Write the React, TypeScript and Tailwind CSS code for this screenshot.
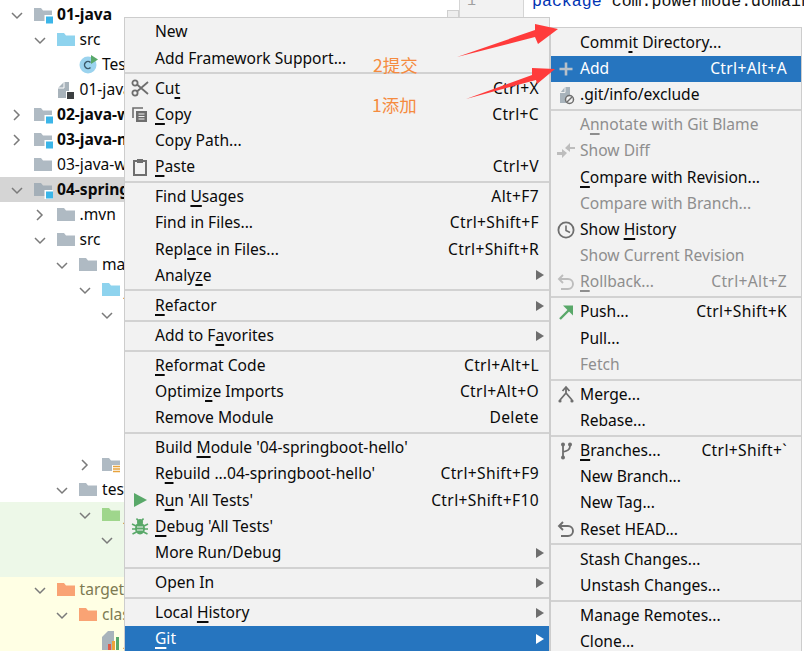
import React from "react";

const font = "font-['Noto_Sans','Liberation_Sans',sans-serif]";

type Item = { l?: React.ReactNode; s?: string; i?: React.ReactNode; d?: boolean; a?: boolean; sub?: boolean; sep?: boolean };

const U = ({ c }: { c: string }) => <span className="underline decoration-[1.5px] underline-offset-[3px]">{c}</span>;

const IconBox = ({ children }: { children: React.ReactNode }) => (
  <svg width="20" height="20" viewBox="0 0 20 20" fill="none">{children}</svg>
);

const Scissors = () => (
  <IconBox>
    <circle cx="5" cy="5" r="2.6" stroke="#6e6e6e" strokeWidth="1.8" />
    <circle cx="5" cy="15" r="2.6" stroke="#6e6e6e" strokeWidth="1.8" />
    <path d="M7 6.5 L18 16 M7 13.5 L18 4" stroke="#6e6e6e" strokeWidth="1.8" />
  </IconBox>
);
const CopyI = () => (
  <IconBox>
    <path d="M3 13V3h10" stroke="#6e6e6e" strokeWidth="1.6" />
    <rect x="6" y="6" width="11" height="11" fill="#6e6e6e" />
    <path d="M8.5 9h6M8.5 11.5h6M8.5 14h6" stroke="#f2f2f2" strokeWidth="1.2" />
  </IconBox>
);
const Paste = () => (
  <IconBox>
    <rect x="4" y="4" width="12" height="14" stroke="#6e6e6e" strokeWidth="2" />
    <rect x="7" y="2" width="6" height="4" fill="#6e6e6e" />
  </IconBox>
);
const RunI = () => (
  <IconBox>
    <path d="M4 3 L17 10 L4 17 Z" fill="#59a869" />
  </IconBox>
);
const Bug = () => (
  <IconBox>
    <ellipse cx="10" cy="11.5" rx="5" ry="6" fill="#59a869" />
    <circle cx="10" cy="5" r="3" fill="#59a869" />
    <path d="M2 7l4 2M18 7l-4 2M2 12h4M18 12h-4M2.5 17l4-2M17.5 17l-4-2M6.5 1.5 8 3.5M13.5 1.5 12 3.5" stroke="#59a869" strokeWidth="1.6" />
    <path d="M7 10h6M7 13h6" stroke="#f2f2f2" strokeWidth="1.2" />
  </IconBox>
);
const Plus = () => (
  <IconBox>
    <path d="M10 3.5v13M3.5 10h13" stroke="#b9c1c9" strokeWidth="2.6" />
  </IconBox>
);
const Exclude = () => (
  <IconBox>
    <path d="M4 8 L9 2 H14 V18 H4 Z" fill="#a8b3bb" />
    <path d="M4 7.5 H9 V2" stroke="#f2f2f2" strokeWidth="1" />
    <circle cx="13.5" cy="14.5" r="4" fill="#f2f2f2" stroke="#6e6e6e" strokeWidth="1.5" />
    <path d="M11 17 L16 12" stroke="#6e6e6e" strokeWidth="1.5" />
  </IconBox>
);
const Diff = () => (
  <IconBox>
    <path d="M1 12h5V9l5 4-5 5v-3H1z" fill="#bdbdbd" transform="translate(0 -1)" />
    <path d="M19 6h-5V2L9 7l5 4V8h5z" fill="#bdbdbd" />
  </IconBox>
);
const Clock = () => (
  <IconBox>
    <circle cx="10" cy="10" r="7.6" stroke="#6e6e6e" strokeWidth="1.8" />
    <path d="M10 5.5V10.5L14 12.5" stroke="#6e6e6e" strokeWidth="1.6" />
  </IconBox>
);
const Undo = ({ c }: { c: string }) => (
  <IconBox>
    <path d="M7 3 L3 7 L7 11 M3 7 H12 A5 5 0 0 1 12 17 H5" stroke={c} strokeWidth="1.9" />
  </IconBox>
);
const Push = () => (
  <IconBox>
    <path d="M4 17 L15 6" stroke="#59a869" strokeWidth="2.4" />
    <path d="M7 3.5 H17 V13.5 Z" fill="#59a869" />
  </IconBox>
);
const Merge = () => (
  <IconBox>
    <path d="M10 2v7M10 8 L4 15 M10 8 L16 15" stroke="#6e6e6e" strokeWidth="1.8" />
    <path d="M6.5 6 L10 2 L13.5 6" stroke="#6e6e6e" strokeWidth="1.8" />
    <circle cx="4" cy="16" r="1.6" fill="#6e6e6e" />
    <circle cx="16" cy="16" r="1.6" fill="#6e6e6e" />
  </IconBox>
);
const Branch = () => (
  <IconBox>
    <path d="M7 4v12M14 5c0 4-3 5-7 6" stroke="#6e6e6e" strokeWidth="1.8" />
    <circle cx="7" cy="3.5" r="2" fill="#6e6e6e" />
    <circle cx="14" cy="3.5" r="2" fill="#6e6e6e" />
    <circle cx="7" cy="16.5" r="2" fill="#6e6e6e" />
  </IconBox>
);

const menu1: Item[] = [
  { l: "New" },
  { l: "Add Framework Support..." },
  { sep: true },
  { l: <>Cu<U c="t" /></>, s: "Ctrl+X", i: <Scissors /> },
  { l: <><U c="C" />opy</>, s: "Ctrl+C", i: <CopyI /> },
  { l: "Copy Path..." },
  { l: <><U c="P" />aste</>, s: "Ctrl+V", i: <Paste /> },
  { sep: true },
  { l: <>Find <U c="U" />sages</>, s: "Alt+F7" },
  { l: "Find in Files...", s: "Ctrl+Shift+F" },
  { l: <>Repl<U c="a" />ce in Files...</>, s: "Ctrl+Shift+R" },
  { l: <>Analy<U c="z" />e</>, sub: true },
  { sep: true },
  { l: <><U c="R" />efactor</>, sub: true },
  { sep: true },
  { l: <>Add to F<U c="a" />vorites</>, sub: true },
  { sep: true },
  { l: <><U c="R" />eformat Code</>, s: "Ctrl+Alt+L" },
  { l: <>Optimi<U c="z" />e Imports</>, s: "Ctrl+Alt+O" },
  { l: "Remove Module", s: "Delete" },
  { sep: true },
  { l: <>Build <U c="M" />odule '04-springboot-hello'</> },
  { l: <>R<U c="e" />build ...04-springboot-hello'</>, s: "Ctrl+Shift+F9" },
  { l: <>R<U c="u" />n 'All Tests'</>, s: "Ctrl+Shift+F10", i: <RunI /> },
  { l: <><U c="D" />ebug 'All Tests'</>, i: <Bug /> },
  { l: "More Run/Debug", sub: true },
  { sep: true },
  { l: "Open In", sub: true },
  { sep: true },
  { l: <>Local <U c="H" />istory</>, sub: true },
  { l: <><U c="G" />it</>, sub: true, a: true },
];

const menu2: Item[] = [
  { l: <>Comm<U c="i" />t Directory...</> },
  { l: "Add", s: "Ctrl+Alt+A", i: <Plus />, a: true },
  { l: ".git/info/exclude", i: <Exclude /> },
  { sep: true },
  { l: <>A<U c="n" />notate with Git Blame</>, d: true },
  { l: "Show Diff", d: true, i: <Diff /> },
  { l: <><U c="C" />ompare with Revision...</> },
  { l: "Compare with Branch...", d: true },
  { l: <>Show <U c="H" />istory</>, i: <Clock /> },
  { l: "Show Current Revision", d: true },
  { l: <><U c="R" />ollback...</>, s: "Ctrl+Alt+Z", d: true, i: <Undo c="#bdbdbd" /> },
  { sep: true },
  { l: "Push...", s: "Ctrl+Shift+K", i: <Push /> },
  { l: "Pull..." },
  { l: "Fetch", d: true },
  { sep: true },
  { l: "Merge...", i: <Merge /> },
  { l: "Rebase..." },
  { sep: true },
  { l: <><U c="B" />ranches...</>, s: "Ctrl+Shift+`", i: <Branch /> },
  { l: "New Branch..." },
  { l: "New Tag..." },
  { l: "Reset HEAD...", i: <Undo c="#6e6e6e" /> },
  { sep: true },
  { l: "Stash Changes..." },
  { l: "Unstash Changes..." },
  { sep: true },
  { l: "Manage Remotes..." },
  { l: "Clone..." },
];

function Menu({ items, className, pad }: { items: Item[]; className: string; pad: "a" | "b" }) {
  return (
    <div className={`absolute bg-[#f2f2f2] border-l border-t border-r border-[#cdcdcd] text-[15.6px] ${font} ${className}`}>
      {items.map((it, i) =>
        it.sep ? (
          <div key={i} className="h-[3.85px] flex items-center">
            <div className="h-[2px] w-full bg-[#d2d2d2]" />
          </div>
        ) : (
          <div
            key={i}
            className={`h-[26.2px] flex items-center whitespace-nowrap ${it.a ? "bg-[#2675bf] text-white" : it.d ? "text-[#8e8e8e]" : "text-[#0a0a0a]"}`}
          >
            <span className={`flex justify-center shrink-0 ${pad === "a" ? "w-[30px]" : "w-[29px]"}`}>{it.i}</span>
            <span className="flex-1">{it.l}</span>
            {it.s && <span className={`tracking-[0.35px] ${pad === "a" ? "mr-[10px]" : "mr-[14px]"}`}>{it.s}</span>}
            {it.sub && (
              <svg width="8" height="10" viewBox="0 0 8 10" className="mr-[5px]">
                <path d="M0 0 L8 5 L0 10 Z" fill={it.a ? "#ffffff" : "#6e6e6e"} />
              </svg>
            )}
          </div>
        )
      )}
    </div>
  );
}

const Chevron = ({ open }: { open: boolean }) => (
  <svg width="12" height="12" viewBox="0 0 12 12" fill="none">
    <path d={open ? "M1 4 L6 9 L11 4" : "M3 1 L8 6 L3 11"} stroke="#7a7a7a" strokeWidth="1.5" />
  </svg>
);

const Folder = ({ c, badge }: { c: string; badge?: string }) => (
  <svg width="19" height="18" viewBox="0 0 19 18">
    <path d="M0 2 H7 L9 4.5 H18 V15 H0 Z" fill={c} />
    {badge === "blue" && (
      <>
        <rect x="10.5" y="9" width="8.5" height="9" fill="#ffffff" />
        <rect x="12" y="10.5" width="7" height="7" fill="#3bb5e8" />
      </>
    )}
    {badge === "lines" && (
      <>
        <rect x="10" y="9" width="9" height="9" fill="#ffffff" />
        <path d="M11 10.5h7M11 13h7M11 15.5h7" stroke="#e8a33d" strokeWidth="1.3" />
      </>
    )}
  </svg>
);

const FileIcon = () => (
  <svg width="17" height="18" viewBox="0 0 17 18">
    <path d="M1 7 L7 1 H12 V17 H1 Z" fill="#a8b3bb" />
    <path d="M1 7 H7 V1" stroke="#fff" strokeWidth="1" fill="none" />
    <rect x="9" y="10" width="8" height="8" fill="#fff" />
    <rect x="10" y="11" width="7" height="7" fill="#3c3f41" />
  </svg>
);

const TestIcon = () => (
  <svg width="19" height="19" viewBox="0 0 19 19">
    <circle cx="9" cy="10" r="8.5" fill="#9bd3ee" />
    <path d="M11.5 7.5 A3.5 3.5 0 1 0 11.5 12.5" stroke="#3c5a6b" strokeWidth="1.5" fill="none" />
    <path d="M12 0 L19 4.5 L12 9 Z" fill="#59a869" />
  </svg>
);

const ChartIcon = () => (
  <svg width="19" height="20" viewBox="0 0 19 20">
    <path d="M0 7 L6 1 H12 V20 H0 Z" fill="#a8b3bb" />
    <rect x="6" y="14" width="3" height="6" fill="#e05a47" />
    <rect x="10" y="11" width="3" height="9" fill="#eda43a" />
    <rect x="14" y="7" width="3" height="13" fill="#59a869" />
  </svg>
);

type Row = { lv?: number; ch?: "o" | "c"; ic?: React.ReactNode; t?: string; b?: boolean; c?: string; bg?: string };

const rows: Row[] = [
  { lv: 0, ch: "o", ic: <Folder c="#afbac3" badge="blue" />, t: "01-java", b: true },
  { lv: 1, ch: "o", ic: <Folder c="#8ed3ee" />, t: "src" },
  { lv: 2, ic: <TestIcon />, t: "TestController" },
  { lv: 1, ic: <FileIcon />, t: "01-java.iml" },
  { lv: 0, ch: "c", ic: <Folder c="#afbac3" badge="blue" />, t: "02-java-web", b: true },
  { lv: 0, ch: "c", ic: <Folder c="#afbac3" badge="blue" />, t: "03-java-maven", b: true },
  { lv: 0, ic: <Folder c="#afbac3" />, t: "03-java-web" },
  { lv: 0, ch: "o", ic: <Folder c="#a4afb8" badge="blue" />, t: "04-springboot", b: true, bg: "bg-[#d5d5d5]" },
  { lv: 1, ch: "c", ic: <Folder c="#afbac3" />, t: ".mvn" },
  { lv: 1, ch: "o", ic: <Folder c="#afbac3" />, t: "src" },
  { lv: 2, ch: "o", ic: <Folder c="#afbac3" />, t: "main" },
  { lv: 3, ch: "o", ic: <Folder c="#8ed3ee" />, t: "java" },
  { lv: 4, ch: "o" },
  {}, {}, {}, {}, {},
  { lv: 3, ch: "c", ic: <Folder c="#afbac3" badge="lines" />, t: "resources" },
  { lv: 2, ch: "o", ic: <Folder c="#afbac3" />, t: "test" },
  { lv: 3, ch: "o", ic: <Folder c="#9fd68c" />, t: "java", bg: "bg-[#edf8e8]" },
  { lv: 4, ch: "o", bg: "bg-[#edf8e8]" },
  { bg: "bg-[#edf8e8]" },
  { lv: 1, ch: "o", ic: <Folder c="#f9a374" />, t: "target", c: "text-[#7d7a52]", bg: "bg-[#ffffe4]" },
  { lv: 2, ch: "o", ic: <Folder c="#f9a374" />, t: "classes", c: "text-[#7d7a52]", bg: "bg-[#ffffe4]" },
  { lv: 3, ic: <ChartIcon />, t: "jacoco", bg: "bg-[#ffffe4]" },
];

function TreeRow({ r }: { r: Row }) {
  const lv = r.lv ?? 0;
  return (
    <div className={`h-[25px] flex items-center shrink-0 whitespace-nowrap text-[15.6px] text-[#0a0a0a] ${r.bg ?? ""}`}>
      <div style={{ width: 11 + 22.5 * lv }} className="shrink-0" />
      <div className="w-[23px] shrink-0 flex">{r.ch && <Chevron open={r.ch === "o"} />}</div>
      {r.ic && <div className="w-[23px] shrink-0 flex">{r.ic}</div>}
      {r.t && <span className={`pt-[1px] ${r.b ? "font-bold" : ""} ${r.c ?? ""}`}>{r.t}</span>}
    </div>
  );
}

export default function App() {
  return (
    <div className={`relative w-[804px] h-[651px] overflow-hidden bg-white flex ${font}`}>
      <div className="w-[459px] shrink-0 pt-[2px] flex flex-col">
        {rows.map((r, i) => (
          <TreeRow key={i} r={r} />
        ))}
      </div>
      <div className="w-[65px] shrink-0 bg-[#f2f2f2] border-x border-[#d5d5d5] pl-[7px] text-[15px] text-[#a0a0a0] font-['Liberation_Mono',monospace] leading-none -mt-[6px]">
        1
      </div>
      <div className="flex-1 pl-[8px] font-['Liberation_Mono',monospace] text-[16.6px] leading-none -mt-[6px] whitespace-nowrap overflow-hidden text-[#111]">
        <span className="text-[#0033b3]">package</span> com.powermode.domain
      </div>

      <div className="absolute left-[447px] top-[10px] w-[12px] h-[8px] bg-[#eeeeee] border border-[#cfcfcf]" />

      <Menu items={menu1} pad="a" className="left-[124px] top-[17px] w-[426px] h-[640px] pt-[1px]" />
      <Menu items={menu2} pad="b" className="left-[550px] top-[27px] w-[252px] h-[640px] pt-[1.5px]" />

      <div className="absolute left-[373px] top-[53px] text-[17.5px] text-[#f58b3f] font-['Noto_Sans_CJK_SC',sans-serif] leading-[24px]">2提交</div>
      <div className="absolute left-[372px] top-[93px] text-[17.5px] text-[#f58b3f] font-['Noto_Sans_CJK_SC',sans-serif] leading-[24px]">1添加</div>

      <svg className="absolute left-0 top-0 pointer-events-none" width="804" height="651">
        <path d="M457 57 L535 30 L535 24 L558 29 L538 44 L535 37 Z" fill="#ff3b3b" />
        <path d="M466 99 L532 75 L532 68 L555 69 L537 84 L536 80 Z" fill="#ff3b3b" />
      </svg>
    </div>
  );
}
